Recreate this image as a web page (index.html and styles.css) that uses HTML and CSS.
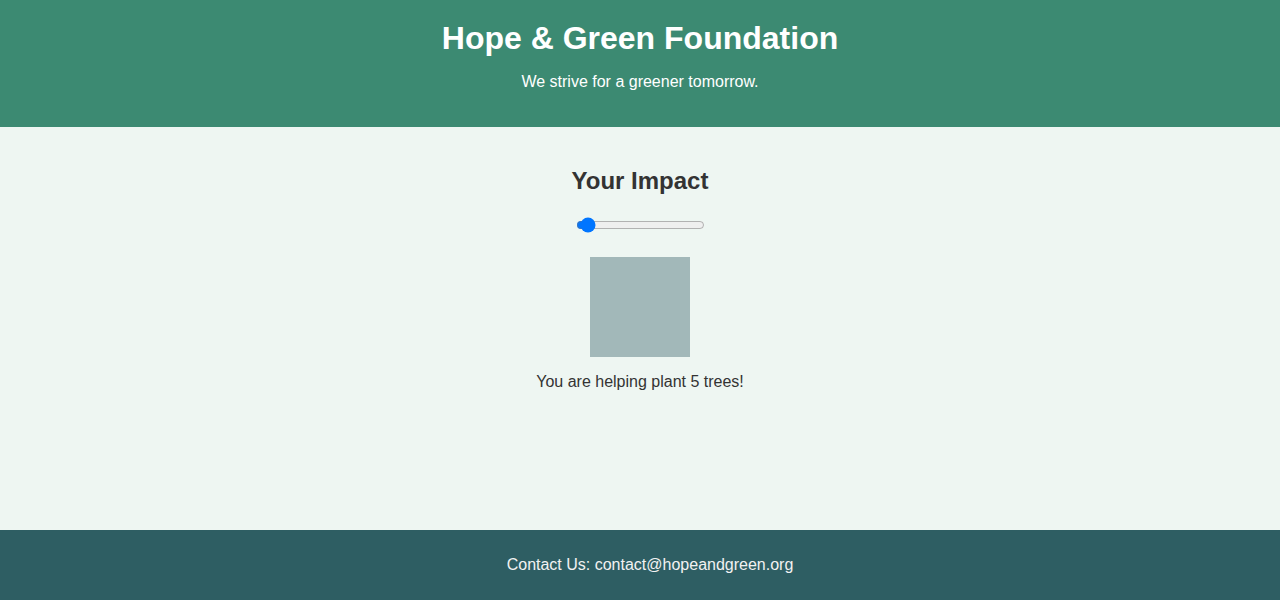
FILE: index.html
```html
<!DOCTYPE html>
<html lang="en">
<head>
<meta charset="utf-8">
<title>Hope &amp; Green Foundation</title>
<link rel="stylesheet" href="styles.css">
</head>
<body>
<header class="site-header">
  <h1 class="site-title">Hope &amp; Green Foundation</h1>
  <p class="tagline">We strive for a greener tomorrow.</p>
</header>
<main class="impact">
  <h2 class="impact-title">Your Impact</h2>
  <input class="impact-slider" type="range" min="1" max="100" value="5">
  <div class="impact-box"></div>
  <p class="impact-text">You are helping plant 5 trees!</p>
</main>
<footer class="site-footer">
  <p class="contact">Contact Us: contact@hopeandgreen.org</p>
</footer>
</body>
</html>
```
FILE: styles.css
```css
html, body {
  margin: 0;
  padding: 0;
}
body {
  font-family: "Liberation Sans", Arial, sans-serif;
  color: #333333;
  background: #eef6f2;
  min-height: 100vh;
  display: flex;
  flex-direction: column;
}
.site-header {
  background: #3c8a72;
  color: #ffffff;
  text-align: center;
  padding: 20px;
}
.site-title {
  margin: 0;
  font-size: 32px;
  line-height: normal;
}
.tagline {
  margin: 16px 0;
  font-size: 16px;
  line-height: normal;
}
.impact {
  flex: 1;
  display: flex;
  flex-direction: column;
  align-items: center;
  padding-top: 40px;
}
.impact-title {
  margin: 0 0 20px;
  font-size: 24px;
  line-height: normal;
}
.impact-slider {
  margin: 2px;
  width: 129px;
  height: 16px;
}
.impact-box {
  width: 100px;
  height: 100px;
  background: #a2b8b9;
  margin-top: 22px;
}
.impact-text {
  margin: 16px 0;
  font-size: 16px;
  line-height: normal;
}
.site-footer {
  background: #2e5e63;
  color: #f2f2f2;
  text-align: center;
  padding: 26px 20px 26px 40px;
}
.contact {
  margin: 0;
  font-size: 16px;
  line-height: normal;
}
```
